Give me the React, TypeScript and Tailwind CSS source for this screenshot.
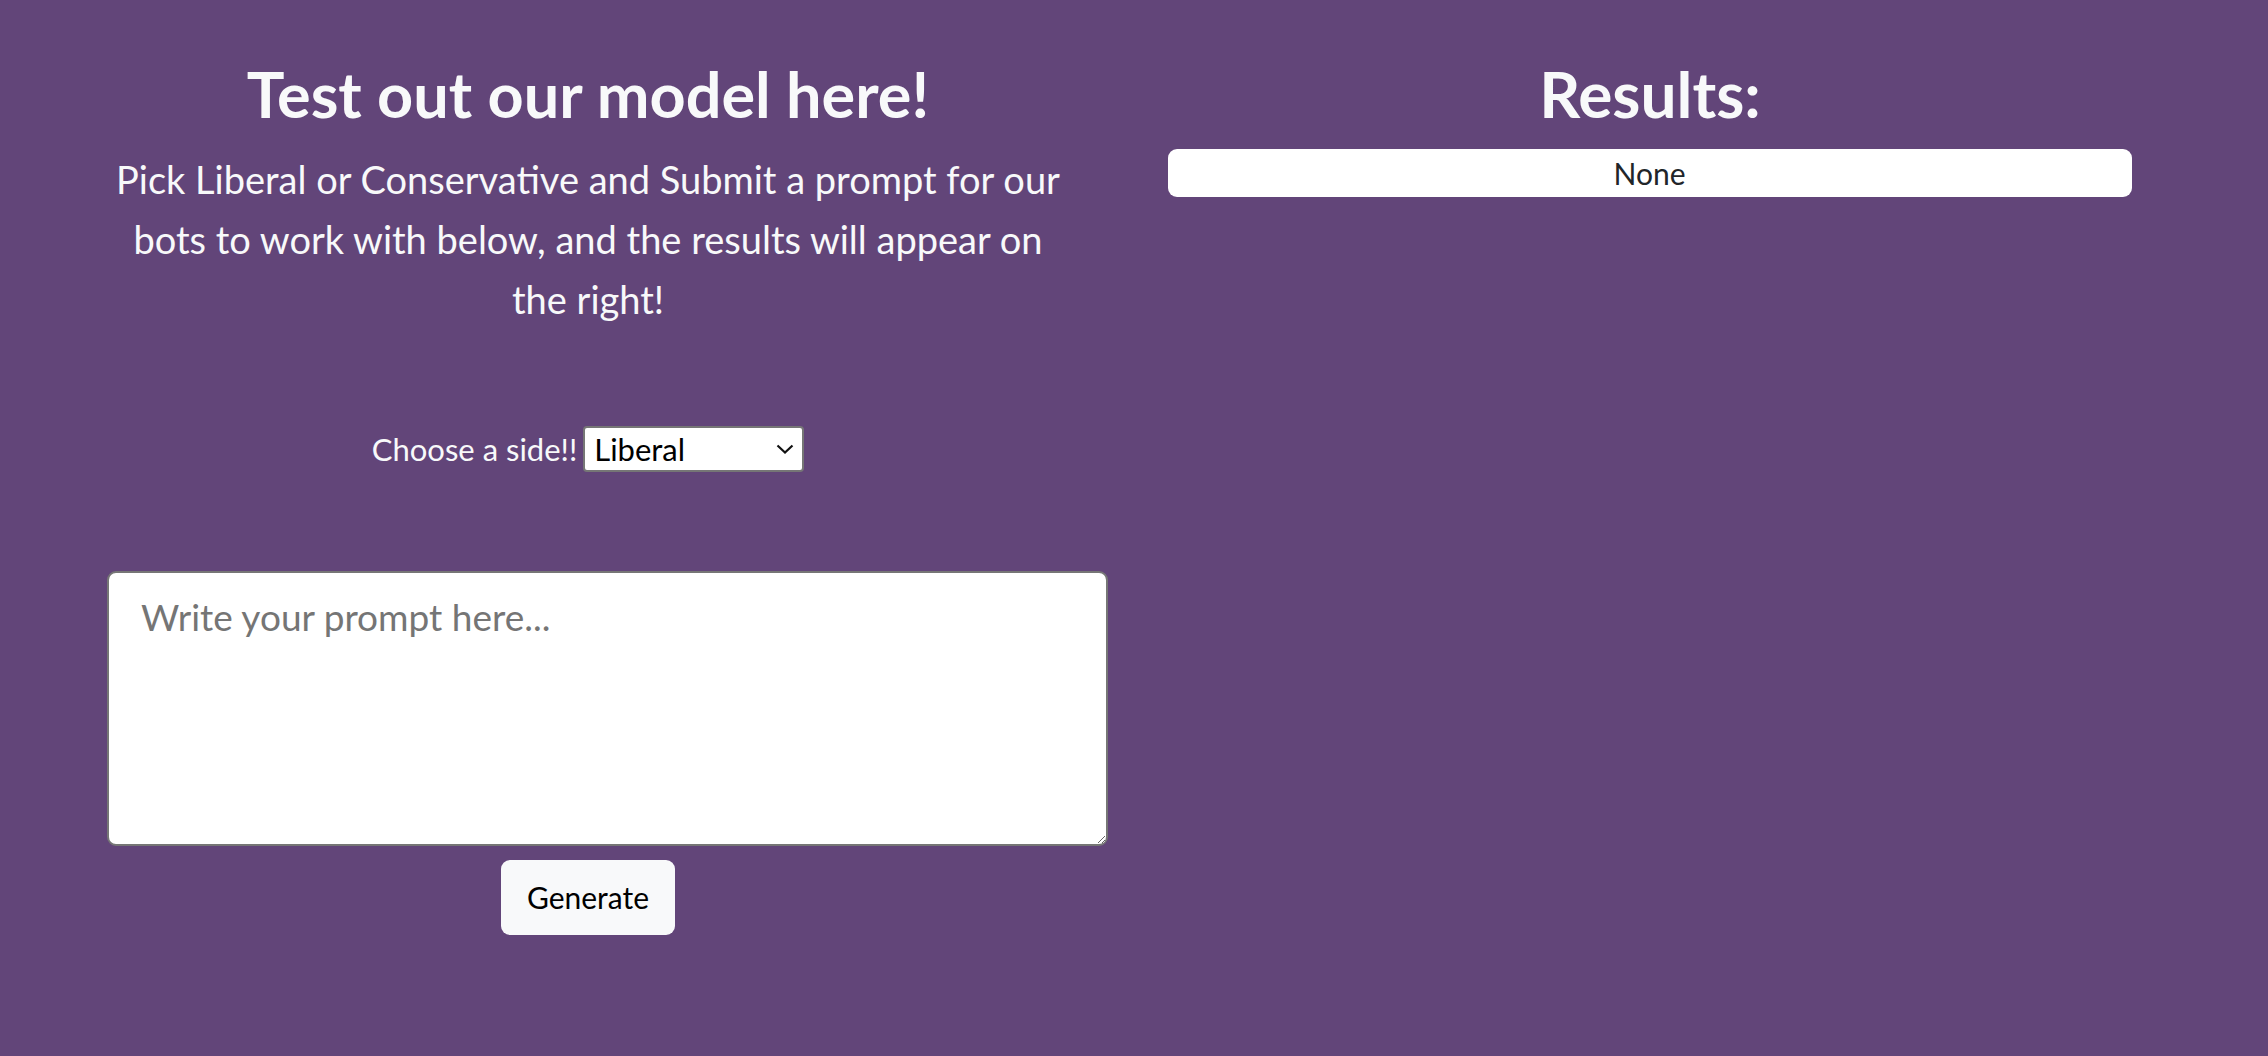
import { useState } from "react";

const FONT = "font-['Lato','Noto_Sans',sans-serif]";

export default function App() {
  const [side, setSide] = useState("liberal");
  const [prompt, setPrompt] = useState("");
  const [result] = useState<string | null>(null);

  return (
    <main className={`min-h-[1056px] w-full bg-[#624579] ${FONT} text-[#f8f9fa]`}>
      <div className="flex pl-[57px]">
        {/* left: prompt form */}
        <section className="flex w-[1062px] flex-col items-center pt-[60px]">
          <h1 className="text-[63px] font-bold leading-[68px]">
            Test out our model here!
          </h1>
          <p className="mt-[21px] text-center text-[38px] leading-[60px]">
            Pick Liberal or Conservative and Submit a prompt for our
            <br />
            bots to work with below, and the results will appear on
            <br />
            the right!
          </p>

          <div className="mt-[97px] flex items-center gap-[6px]">
            <label htmlFor="side" className="text-[31px]">
              Choose a side!!
            </label>
            <div className="relative">
              <select
                id="side"
                value={side}
                onChange={(e) => setSide(e.target.value)}
                className="h-[46px] w-[221px] appearance-none rounded-[4px] border-2 border-[#767676] bg-white pl-[9px] text-[31px] leading-none text-black outline-none"
              >
                <option value="liberal">Liberal</option>
                <option value="conservative">Conservative</option>
              </select>
              <svg
                width="18"
                height="10"
                viewBox="0 0 18 10"
                fill="none"
                className="pointer-events-none absolute right-[10px] top-[18px]"
              >
                <path d="M1.5 1.5L9 8.5L16.5 1.5" stroke="#111" strokeWidth="2.2" />
              </svg>
            </div>
          </div>

          <textarea
            value={prompt}
            onChange={(e) => setPrompt(e.target.value)}
            placeholder="Write your prompt here..."
            className="mt-[98px] ml-[39px] h-[275px] w-[1001px] rounded-[9px] border-2 border-[#767676] bg-white px-[32px] py-[16px] text-[37px] text-black outline-none placeholder:text-[#757575]"
          />

          <button className="mt-[14px] h-[75px] w-[174px] rounded-[9px] bg-[#f8f9fa] text-[30px] text-black">
            Generate
          </button>
        </section>

        {/* right: results */}
        <section className="flex w-[1062px] flex-col items-center pt-[60px]">
          <h1 className="text-[64px] font-bold leading-[68px]">Results:</h1>
          <div className="mt-[21px] ml-[-1px] flex h-[48px] w-[964px] items-center justify-center rounded-[9px] bg-white text-[30px] text-[#212529]">
            {result ?? "None"}
          </div>
        </section>
      </div>
    </main>
  );
}
